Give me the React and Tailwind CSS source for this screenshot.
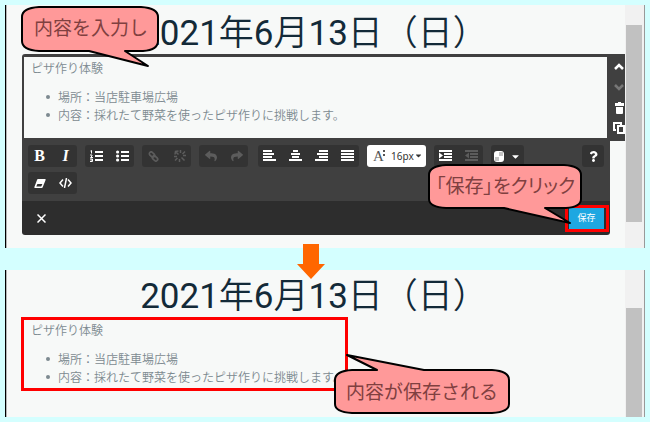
import { FaReply, FaShare, FaQuestion, FaCaretDown } from "react-icons/fa";

const JP = "font-['Noto_Sans_CJK_JP',sans-serif]";

function Title() {
  return (
    <h1 className="pr-[4px] text-center text-[35px] leading-[36px] whitespace-nowrap text-[#132a38] font-[Roboto,'Noto_Sans_CJK_JP',sans-serif]">
      2021<span className="font-[350]">年</span>6<span className="font-[350]">月</span>13
      <span className="font-[350]">日（日）</span>
    </h1>
  );
}

function Item({ children }) {
  return (
    <li className="flex items-center gap-[8px]">
      <span className="size-[4px] rounded-full bg-[#7d8a90]" />
      <span>{children}</span>
    </li>
  );
}

function Article() {
  return (
    <div className={`text-[12px] leading-[18px] font-[350] text-[#7d8a90] whitespace-nowrap ${JP}`}>
      <p>ピザ作り体験</p>
      <ul className="mt-[11px] pl-[15px]">
        <Item>場所：当店駐車場広場</Item>
        <Item>内容：採れたて野菜を使ったピザ作りに挑戦します。</Item>
      </ul>
    </div>
  );
}

function Scrollbar({ thumb }) {
  return (
    <div className="flex w-[20px] shrink-0 flex-col border-r border-[#999] bg-[#f1f1f1] pr-[2px] pl-px">
      <div className={`bg-[#c1c1c1] ${thumb}`} />
    </div>
  );
}

function Panel({ thumb, children }) {
  return (
    <section className="relative mr-[5px] ml-[5px] flex border-l border-black bg-[#f7f9f8]">
      <div className="min-w-0 flex-1 border-l border-[#b5b5b5]">{children}</div>
      <Scrollbar thumb={thumb} />
    </section>
  );
}

function Callout({ className, width, height, d, textClass, children }) {
  return (
    <div className={`absolute ${className}`}>
      <svg width={width} height={height} className="block">
        <path d={d} fill="#ff9999" stroke="#000" strokeWidth="2" strokeLinejoin="round" />
      </svg>
      <p className={`absolute inset-x-0 text-center text-[19px] leading-[24px] whitespace-nowrap text-[#804040] ${JP} ${textClass}`}>
        {children}
      </p>
    </div>
  );
}

function Group({ children }) {
  return <div className="flex gap-[3px] rounded-[3px] bg-[#333]">{children}</div>;
}

function Tool({ label, dim, children }) {
  return (
    <button
      type="button"
      aria-label={label}
      className={`flex h-[22px] w-[23px] items-center justify-center text-[12px] ${dim ? "text-[#5c5c5c]" : "text-white"}`}
    >
      {children}
    </button>
  );
}

function Lines({ rows }) {
  return (
    <svg width="13" height="12" fill="currentColor">
      {rows.map(([x, w], i) => (
        <rect key={i} x={x} y={i * 3} width={w} height="2" />
      ))}
    </svg>
  );
}

function Indent({ out }) {
  return (
    <svg width="13" height="12" fill="currentColor">
      <path d="M0 0h13v2H0zM5 3h8v2H5zM5 6h8v2H5zM0 9h13v2H0z" />
      <path d={out ? "M4 2.500v6L0 5.500z" : "M0 2.500v6L4 5.500z"} />
    </svg>
  );
}

function NumberedIcon() {
  return (
    <svg width="13" height="12" fill="currentColor">
      <path d="M5 1h8v2H5zM5 5h8v2H5zM5 9h8v2H5z" />
      <path d="M1.500 .5v3M.5 1L1.500.5M0 5h2v1L.5 7.500H3M0 9h2.500v2.500H0M.5 10h2" fill="none" stroke="currentColor" />
    </svg>
  );
}

function BulletedIcon() {
  return (
    <svg width="13" height="12" fill="currentColor">
      <path d="M5 1h8v2H5zM5 5h8v2H5zM5 9h8v2H5z" />
      <circle cx="1.600" cy="2" r="1.600" />
      <circle cx="1.600" cy="6" r="1.600" />
      <circle cx="1.600" cy="10" r="1.600" />
    </svg>
  );
}

function ChainIcon() {
  return (
    <svg width="11" height="11" fill="none" stroke="currentColor" strokeWidth="1.700">
      <rect x="1" y="1.800" width="6" height="3.600" rx="1.800" transform="rotate(45 4 3.600)" />
      <rect x="4" y="5.600" width="6" height="3.600" rx="1.800" transform="rotate(45 7 7.400)" />
    </svg>
  );
}

function BrokenChainIcon() {
  return (
    <svg width="12" height="12" fill="none" stroke="currentColor" strokeWidth="1.500">
      <path d="M4.500 4.500L1.500 1.500M7.500 7.500L10.500 10.500M6.500 0v3M11 1.500L8.500 4M12 5.500H9M5.500 9v3M1 10.500l2.500-2.500M0 6.500H3M1 4.500L1.500 1.500 4.500 1" />
    </svg>
  );
}

function Toolbar() {
  return (
    <div className="flex flex-wrap gap-x-[8px] gap-y-[5px] bg-[#404040] px-[6px] pt-[7px] pb-[7px]">
      <Group>
        <Tool label="太字"><span className="font-['Liberation_Serif',serif] text-[16px] font-bold">B</span></Tool>
        <Tool label="斜体"><span className="font-['Liberation_Serif',serif] text-[16px] font-bold italic">I</span></Tool>
      </Group>
      <Group>
        <Tool label="番号付きリスト"><NumberedIcon /></Tool>
        <Tool label="箇条書き"><BulletedIcon /></Tool>
      </Group>
      <Group>
        <Tool label="リンク" dim><ChainIcon /></Tool>
        <Tool label="リンク解除" dim><BrokenChainIcon /></Tool>
      </Group>
      <Group>
        <Tool label="元に戻す" dim><FaReply size={12} /></Tool>
        <Tool label="やり直す" dim><FaShare size={12} /></Tool>
      </Group>
      <div className="ml-[2px]">
        <Group>
          <Tool label="左揃え"><Lines rows={[[0, 9], [0, 11], [0, 9], [0, 13]]} /></Tool>
          <Tool label="中央揃え"><Lines rows={[[4, 5], [2, 9], [3, 7], [0, 13]]} /></Tool>
          <Tool label="右揃え"><Lines rows={[[4, 9], [2, 11], [4, 9], [0, 13]]} /></Tool>
          <Tool label="両端揃え"><Lines rows={[[0, 13], [0, 13], [0, 13], [0, 13]]} /></Tool>
        </Group>
      </div>
      <label className="relative block h-[22px] w-[59px] rounded-[3px] bg-white text-[#333]">
        <span className="absolute top-px left-[6px] font-['Liberation_Serif',serif] text-[15px] leading-[20px] text-[#555]">A</span>
        <span className="absolute top-[5px] left-[16px] flex flex-col gap-[2px]">
          <i className="block size-[2px] bg-[#555]" />
          <i className="block size-[2px] bg-[#555]" />
        </span>
        <select aria-label="文字サイズ" defaultValue="16" className="block h-[22px] w-full appearance-none bg-transparent pl-[24px] font-['Noto_Sans',sans-serif] text-[10px] leading-[22px]">
          <option value="16">16px</option>
        </select>
        <FaCaretDown className="pointer-events-none absolute top-[6px] right-[3px]" size={9} />
      </label>
      <Group>
        <Tool label="インデント"><Indent /></Tool>
        <Tool label="インデント解除" dim><Indent out /></Tool>
      </Group>
      <Group>
        <button type="button" aria-label="文字色" className="flex h-[22px] w-[33px] items-center justify-center gap-[6px] text-white">
          <svg width="10" height="11">
            <rect width="10" height="11" rx="3" fill="#fff" />
            <path d="M5 1h4v4H5zM1 6h4v4H1z" fill="#c4c4c4" />
          </svg>
          <FaCaretDown size={11} />
        </button>
      </Group>
      <div className="ml-auto">
        <button type="button" aria-label="ヘルプ" className="flex h-[22px] w-[22px] items-center justify-center rounded-[3px] bg-[#333] text-white">
          <FaQuestion size={11} />
        </button>
      </div>
      <div className="w-full">
        <div className="flex">
          <Group>
            <Tool label="書式クリア">
              <svg width="12" height="9">
                <path d="M4 0h7q1 0 .6 1L9 7.500Q8.600 9 7.500 9H1Q0 9 .4 8L3 1Q3.300 0 4 0z" fill="#fff" />
                <path d="M3.400 5h5L7.200 7.500H2.300z" fill="#333" />
              </svg>
            </Tool>
            <Tool label="ソース">
              <svg width="13" height="10" fill="none" stroke="#fff" strokeWidth="1.500">
                <path d="M4 1.500L1 5l3 3.500M9 1.500L12 5 9 8.500M7.500 0l-2 10" />
              </svg>
            </Tool>
          </Group>
        </div>
      </div>
    </div>
  );
}

function SideTools() {
  return (
    <div className="-mb-[3px] flex w-[18px] shrink-0 flex-col items-end gap-[8px] overflow-hidden bg-[#404040] pt-[6px] text-white">
      <button type="button" aria-label="上へ" className="mr-px h-[13px]">
        <svg width="10" height="7" fill="none" stroke="currentColor" strokeWidth="2.500"><path d="M1 6l4-4 4 4" /></svg>
      </button>
      <button type="button" aria-label="下へ" className="mr-px h-[13px] text-[#777]">
        <svg width="10" height="7" fill="none" stroke="currentColor" strokeWidth="2.500"><path d="M1 1l4 4 4-4" /></svg>
      </button>
      <button type="button" aria-label="削除" className="mr-px h-[12px]">
        <svg width="9" height="12" fill="currentColor"><path d="M3 0h3v1h3v3H0V1h3zM1 5h7v6q0 1-1 1H2q-1 0-1-1z" /></svg>
      </button>
      <button type="button" aria-label="複製" className="h-[12px]">
        <svg width="12" height="12" fill="none" stroke="currentColor" strokeWidth="2"><path d="M3 8H1V1h7v2M5 4h6v7H5z" /></svg>
      </button>
    </div>
  );
}

export default function App() {
  return (
    <main className="min-h-[422px] bg-[#d4ffff] py-[5px]">
      <Panel thumb="mt-[20px] h-[197px]">
        <div className="pt-[11px] pb-[13px]">
          <Title />
          <div className="mt-[2px] ml-[15px]">
            <div className="flex">
              <div className="min-w-0 flex-1 rounded-tl-[3px] border-t-[3px] border-l-2 border-[#404040] pt-[2px] pb-[14px] pl-[7px]">
                <Article />
              </div>
              <SideTools />
            </div>
            <div className="mr-[15px] overflow-hidden rounded-b-[3px]">
              <Toolbar />
              <div className="flex h-[34px] items-center justify-between bg-[#2d2d2d] pr-px pl-[15px]">
                <button type="button" aria-label="閉じる">
                  <svg width="9" height="9" fill="none" stroke="#fff" strokeWidth="1.500"><path d="M.5 .5l8 8M8.500 .5l-8 8" /></svg>
                </button>
                <div className="border-[3px] border-[#ff0000] pr-[2px] pl-px">
                  <button type="button" className={`block h-[21px] w-[35px] bg-[#1ea7e1] text-[9px] text-white ${JP}`}>保存</button>
                </div>
              </div>
            </div>
          </div>
        </div>
        <Callout
          className="top-0 left-[15px]"
          width={140}
          height={64}
          textClass="top-[10px]"
          d="M18 2H120Q137 3 137 12V36Q137 45 122 46H104L127 61 68 46H18Q1 45 1 36V12Q1 3 18 2Z"
        >
          内容を入力し
        </Callout>
        <Callout
          className="top-[158px] right-[62px]"
          width={155}
          height={64}
          textClass="top-[10px] [font-feature-settings:'palt']"
          d="M18 2H136Q153 3 153 12V36Q153 44 138 45H117L142 60 76 45H18Q1 44 1 36V12Q1 3 18 2Z"
        >
          「保存」をクリック
        </Callout>
      </Panel>

      <div className="relative h-[22px]">
        <svg width="28" height="36" className="absolute -top-[4px] left-[297px] z-10">
          <path d="M6 0H22V20H28L14 35 0 20H6Z" fill="#ff6600" />
        </svg>
      </div>

      <Panel thumb="mt-[38px] flex-1">
        <div className="pt-[9px] pb-[26px]">
          <Title />
          <div className="mt-[2px] ml-[14px] w-[327px] border-[3px] border-[#ff0000] pt-px pb-[2px] pl-[7px]">
            <Article />
          </div>
        </div>
        <Callout
          className="top-[83px] left-[327px]"
          width={178}
          height={62}
          textClass="top-[26px]"
          d="M14 2L44 17H19Q2 18 2 27V51Q2 59 19 60H159Q176 59 176 51V27Q176 18 159 17H91Z"
        >
          内容が保存される
        </Callout>
      </Panel>
    </main>
  );
}
